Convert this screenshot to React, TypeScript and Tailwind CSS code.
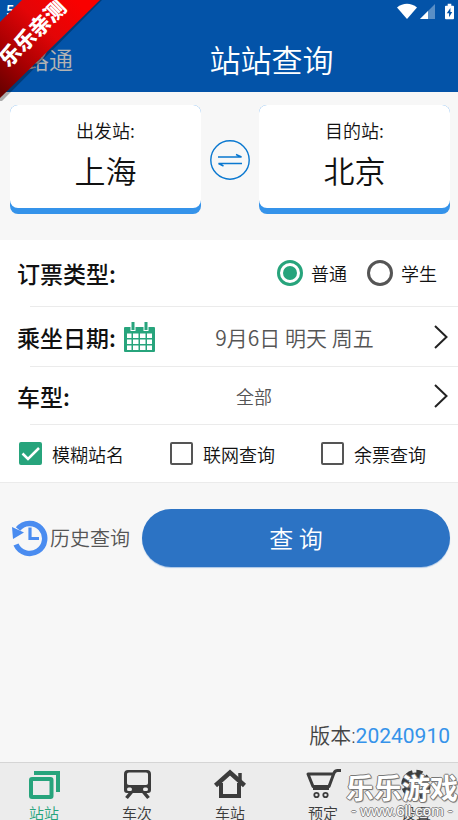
import { useState } from "react";
import type { ReactNode } from "react";
import clsx from "clsx";

type Option = { key: string; label: string };

type Tab = Option & { icon: ReactNode };

const ticketTypes: Option[] = [
  { key: "normal", label: "普通" },
  { key: "student", label: "学生" },
];

const filters: Option[] = [
  { key: "fuzzy", label: "模糊站名" },
  { key: "online", label: "联网查询" },
  { key: "remaining", label: "余票查询" },
];

const tabs: Tab[] = [
  {
    key: "stations",
    label: "站站",
    icon: (
      <>
        <rect x="3" y="10" width="20.500" height="18" rx="1" strokeWidth="4" />
        <path d="M6 4H30V23" strokeWidth="4" />
      </>
    ),
  },
  {
    key: "trains",
    label: "车次",
    icon: (
      <>
        <path
          fill="currentColor"
          stroke="none"
          fillRule="evenodd"
          d="M7 1H26C28.500 1 30 2.500 30 5V21C30 23 29 24 27 24H6C4 24 3 23 3 21V5C3 2.500 4.500 1 7 1ZM8 3.500C6.700 3.500 6 4.200 6 5.500V14C6 15 6.700 16 8 16H25C26.300 16 27 15 27 14V5.500C27 4.200 26.300 3.500 25 3.500ZM8.500 18.500A2 1.800 0 1 0 8.500 22A2 1.800 0 1 0 8.500 18.500ZM24.500 18.500A2 1.800 0 1 0 24.500 22A2 1.800 0 1 0 24.500 18.500Z"
        />
        <path d="M10.500 23L5.500 29M22.500 23L27.500 29" strokeWidth="3.500" />
      </>
    ),
  },
  {
    key: "station",
    label: "车站",
    icon: (
      <>
        <path d="M1.500 16.500L16 3.500L30.500 16.500" strokeWidth="4.500" />
        <path d="M7 14V27H25V14" strokeWidth="4" />
        <path d="M26 4V12" strokeWidth="3.500" />
      </>
    ),
  },
  {
    key: "booking",
    label: "预定",
    icon: (
      <>
        <path d="M26 5H1L6 17.500H22L27 4C28 2 29 1.500 30.500 1.500H34" strokeWidth="3" strokeLinejoin="round" />
        <path d="M6 20H22" strokeWidth="2" />
        <circle cx="9.500" cy="26" r="2.200" strokeWidth="1.800" />
        <circle cx="18.500" cy="26" r="2.200" strokeWidth="1.800" />
      </>
    ),
  },
  {
    key: "settings",
    label: "设置",
    icon: (
      <>
        <circle cx="16" cy="15.500" r="9.500" strokeWidth="5" />
        <circle cx="16" cy="15.500" r="13" strokeWidth="3.500" strokeDasharray="6.200 4.010" />
      </>
    ),
  },
];

function StatusIcons() {
  return (
    <div className="flex items-center text-white">
      <svg width="20" height="16" viewBox="0 0 20 16" fill="currentColor" aria-hidden="true">
        <path d="M0 4.500C6 -0.500 14 -0.500 20 4.500L10 16Z" />
      </svg>
      <svg className="ml-[3px]" width="15" height="15" viewBox="0 0 16 16" fill="currentColor" aria-hidden="true">
        <path d="M0 16L16 0V16Z" opacity=".35" />
        <path d="M0 16L8.500 7.500V16Z" />
      </svg>
      <svg className="ml-2.5" width="9" height="17" viewBox="0 0 10 17" aria-hidden="true">
        <path fill="currentColor" d="M3 0H7V2H9Q10 2 10 3V16Q10 17 9 17H1Q0 17 0 16V3Q0 2 1 2H3Z" />
        <path fill="#0353a8" d="M6 4.500L2 10.500H4.500V15L8 9H6Z" />
      </svg>
    </div>
  );
}

function Ribbon() {
  return (
    <div className="pointer-events-none absolute left-0 top-0 size-[102px] overflow-hidden">
      <svg className="absolute inset-0" width="102" height="102" viewBox="0 0 102 102" aria-hidden="true">
        <defs>
          <linearGradient id="ribbon" x1="80" y1="5" x2="0" y2="90" gradientUnits="userSpaceOnUse">
            <stop offset="0" stopColor="#f90000" />
            <stop offset=".35" stopColor="#e30507" />
            <stop offset=".7" stopColor="#a80002" />
            <stop offset="1" stopColor="#6c0000" />
          </linearGradient>
        </defs>
        <path d="M24 0H102L2 101L0 101V23Z" fill="#000" opacity=".3" />
        <path d="M22 0H100L0 98V22Z" fill="url(#ribbon)" />
      </svg>
      <div className="flex size-16 items-center justify-center">
        <span className="shrink-0 -rotate-45 whitespace-nowrap text-[21px] font-black leading-none text-white">乐乐亲测</span>
      </div>
    </div>
  );
}

function StationCard({ label, name }: { label: string; name: string }) {
  return (
    <div className="flex-1 rounded-lg bg-[#3593ea] pb-1.5">
      <button type="button" className="flex h-[103px] w-full flex-col items-center rounded-lg bg-white pt-[11px]">
        <span className="text-lg leading-7">{label}</span>
        <span className="mt-0.5 text-[31px] leading-12">{name}</span>
      </button>
    </div>
  );
}

function Chevron() {
  return (
    <svg width="14" height="24" viewBox="0 0 14 24" fill="none" stroke="#222" strokeWidth="2" aria-hidden="true">
      <path d="M1 1L12.500 12L1 23" />
    </svg>
  );
}

function CalendarIcon() {
  return (
    <svg width="31" height="30" viewBox="0 0 31 30" aria-hidden="true">
      <path fill="#27a47c" d="M1 5H30Q31 5 31 6V29Q31 30 30 30H1Q0 30 0 29V6Q0 5 1 5Z" />
      <path
        fill="#fff"
        d="M3 11.500H7.500V16H3ZM9 11.500H14.500V16H9ZM16 11.500H21.500V16H16ZM23 11.500H28V16H23ZM3 17.500H7.500V22H3ZM9 17.500H14.500V22H9ZM16 17.500H21.500V22H16ZM23 17.500H28V22H23ZM3 23.500H7.500V28H3ZM9 23.500H14.500V28H9ZM16 23.500H21.500V28H16ZM23 23.500H28V28H23Z"
      />
      <path stroke="#fff" strokeWidth="5" d="M9 2V9M22 2V9" />
      <path stroke="#27a47c" strokeWidth="3" d="M9 0V8M22 0V8" />
    </svg>
  );
}

function HistoryIcon() {
  return (
    <svg width="37" height="37" viewBox="0 0 37 37" fill="none" stroke="#4a8cf0" aria-hidden="true">
      <path d="M5 24.500A15 15 0 1 0 7 9" strokeWidth="5.500" />
      <path d="M1 7L13 12.500L2 19Z" fill="#4a8cf0" stroke="none" />
      <path d="M19 7.500V18.500H28" strokeWidth="3.200" />
    </svg>
  );
}

export default function App() {
  const [ticketType, setTicketType] = useState("normal");
  const [checked, setChecked] = useState<string[]>(["fuzzy"]);
  const [activeTab, setActiveTab] = useState("stations");
  const [route, setRoute] = useState({ from: "上海", to: "北京" });

  const toggleFilter = (key: string) => {
    setChecked((prev) => (prev.includes(key) ? prev.filter((k) => k !== key) : [...prev, key]));
  };

  return (
    <div className="relative flex min-h-screen flex-col bg-[#f7f7f7] font-['Noto_Sans_CJK_SC',sans-serif] font-[350] text-[#111]">
      <header className="bg-[#0353a8] text-white">
        <div className="flex h-[22px] items-center justify-between pl-1.5 pr-1">
          <span className="font-['Roboto',sans-serif] text-sm font-medium leading-none">5:20</span>
          <StatusIcons />
        </div>
        <div className="flex h-[70px] items-center pl-px pt-1">
          <a href="#home" className="text-2xl leading-9 text-[#b3b3b3]">路路通</a>
          <h1 className="flex-1 pl-3 text-center text-[31px] leading-12">站站查询</h1>
        </div>
      </header>

      <section className="flex items-center pb-[26px] pl-2.5 pr-2 pt-[13px]">
        <StationCard label="出发站:" name={route.from} />
        <button
          type="button"
          aria-label="交换站点"
          onClick={() => setRoute({ from: route.to, to: route.from })}
          className="mx-[9px] size-10 shrink-0"
        >
          <svg width="40" height="40" viewBox="0 0 40 40" fill="none" stroke="#0a78d0" strokeWidth="1.400" aria-hidden="true">
            <circle cx="20" cy="20" r="19.200" />
            <path d="M8 17H31.500L26 14.500M32 23.500H8.500L13.500 26" />
          </svg>
        </button>
        <StationCard label="目的站:" name={route.to} />
      </section>

      <section className="bg-white">
        <fieldset className="flex h-[66px] items-center justify-between pl-[17px] pr-[21px]">
          <span className="text-[23px] font-medium leading-9">订票类型:</span>
          <div className="flex gap-5">
            {ticketTypes.map((type) => (
              <label key={type.key} className="flex items-center gap-2 text-lg leading-7">
                <input
                  type="radio"
                  name="ticket-type"
                  checked={ticketType === type.key}
                  onChange={() => setTicketType(type.key)}
                  className="grid size-[26px] appearance-none place-items-center rounded-full border-3 border-[#555] checked:border-[#27a47c] checked:before:size-3.5 checked:before:rounded-full checked:before:bg-[#27a47c] checked:before:content-['']"
                />
                {type.label}
              </label>
            ))}
          </div>
        </fieldset>

        <hr className="ml-[30px] border-[#ebebeb]" />

        <button type="button" className="flex h-[59px] w-full items-center pl-[17px] pr-2.5">
          <span className="mr-2 text-[23px] font-medium leading-9">乘坐日期:</span>
          <CalendarIcon />
          <span className="flex-1 text-center text-[21px] leading-8 text-[#555]">9月6日 明天 周五</span>
          <Chevron />
        </button>

        <hr className="ml-[30px] border-[#ebebeb]" />

        <button type="button" className="flex h-[57px] w-full items-center pl-[17px] pr-2.5">
          <span className="text-[23px] font-medium leading-9">车型:</span>
          <span className="flex-1 pl-1 text-center text-lg leading-7 text-[#555]">全部</span>
          <Chevron />
        </button>

        <hr className="ml-[30px] border-[#ebebeb]" />

        <div className="flex h-[58px] items-center justify-between border-b border-[#ebebeb] pl-[19px] pr-8">
          {filters.map((filter) => (
            <label key={filter.key} className="flex items-center gap-2.5 text-lg leading-7">
              <span className="grid">
                <input
                  type="checkbox"
                  checked={checked.includes(filter.key)}
                  onChange={() => toggleFilter(filter.key)}
                  className="peer col-start-1 row-start-1 size-[23px] appearance-none rounded-[2px] border-2 border-[#555] checked:border-[#27a47c] checked:bg-[#27a47c]"
                />
                <svg
                  className="pointer-events-none invisible col-start-1 row-start-1 peer-checked:visible"
                  width="23"
                  height="23"
                  viewBox="0 0 23 23"
                  fill="none"
                  stroke="#fff"
                  strokeWidth="2.500"
                  aria-hidden="true"
                >
                  <path d="M3.500 11.500L9 17L20 6" />
                </svg>
              </span>
              {filter.label}
            </label>
          ))}
        </div>
      </section>

      <section className="flex items-center pb-6 pl-[11px] pr-2 pt-[26px]">
        <a href="#history" className="flex shrink-0 items-center gap-0.5 text-xl leading-8 text-[#555]">
          <HistoryIcon />
          历史查询
        </a>
        <button type="button" className="ml-3 h-[58px] flex-1 rounded-full bg-[#2c73c4] text-2xl text-white shadow-[0_1px_1px_#a9c5e6]">
          查 询
        </button>
      </section>

      <p className="mt-auto pb-2.5 pr-2 text-right font-['Roboto','Noto_Sans_CJK_SC',sans-serif] text-[21px] leading-8 text-[#444]">
        版本:<span className="font-normal text-[#3593ea]">20240910</span>
      </p>

      <nav className="relative flex h-[58px] justify-between overflow-hidden border-t border-[#d5d5d5] bg-[#ececec] pl-1 pr-0.5">
        {tabs.map((tab) => (
          <button
            key={tab.key}
            type="button"
            onClick={() => setActiveTab(tab.key)}
            className={clsx(
              "flex w-20 flex-col items-center pt-1.5 text-[15px] leading-5",
              activeTab === tab.key ? "text-[#27a47c]" : "text-[#3c3c3c]",
            )}
          >
            <svg className="mb-0.5 shrink-0 overflow-visible" width="32" height="32" viewBox="0 0 32 32" fill="none" stroke="currentColor" aria-hidden="true">
              {tab.icon}
            </svg>
            {tab.label}
          </button>
        ))}
        <div className="pointer-events-none absolute right-0 top-2 flex flex-col items-center text-white">
          <span className="text-[28px] font-bold leading-8 [text-shadow:1px_0_#777,-1px_0_#777,0_1px_#777,0_-1px_#777,1px_1px_1px_#777]">
            乐乐游戏
          </span>
          <span className="font-['Liberation_Sans',sans-serif] text-[15px] leading-4 [text-shadow:1px_0_#888,-1px_0_#888,0_1px_#888,0_-1px_#888]">
            - www.6ll.com -
          </span>
        </div>
      </nav>

      <Ribbon />
    </div>
  );
}
